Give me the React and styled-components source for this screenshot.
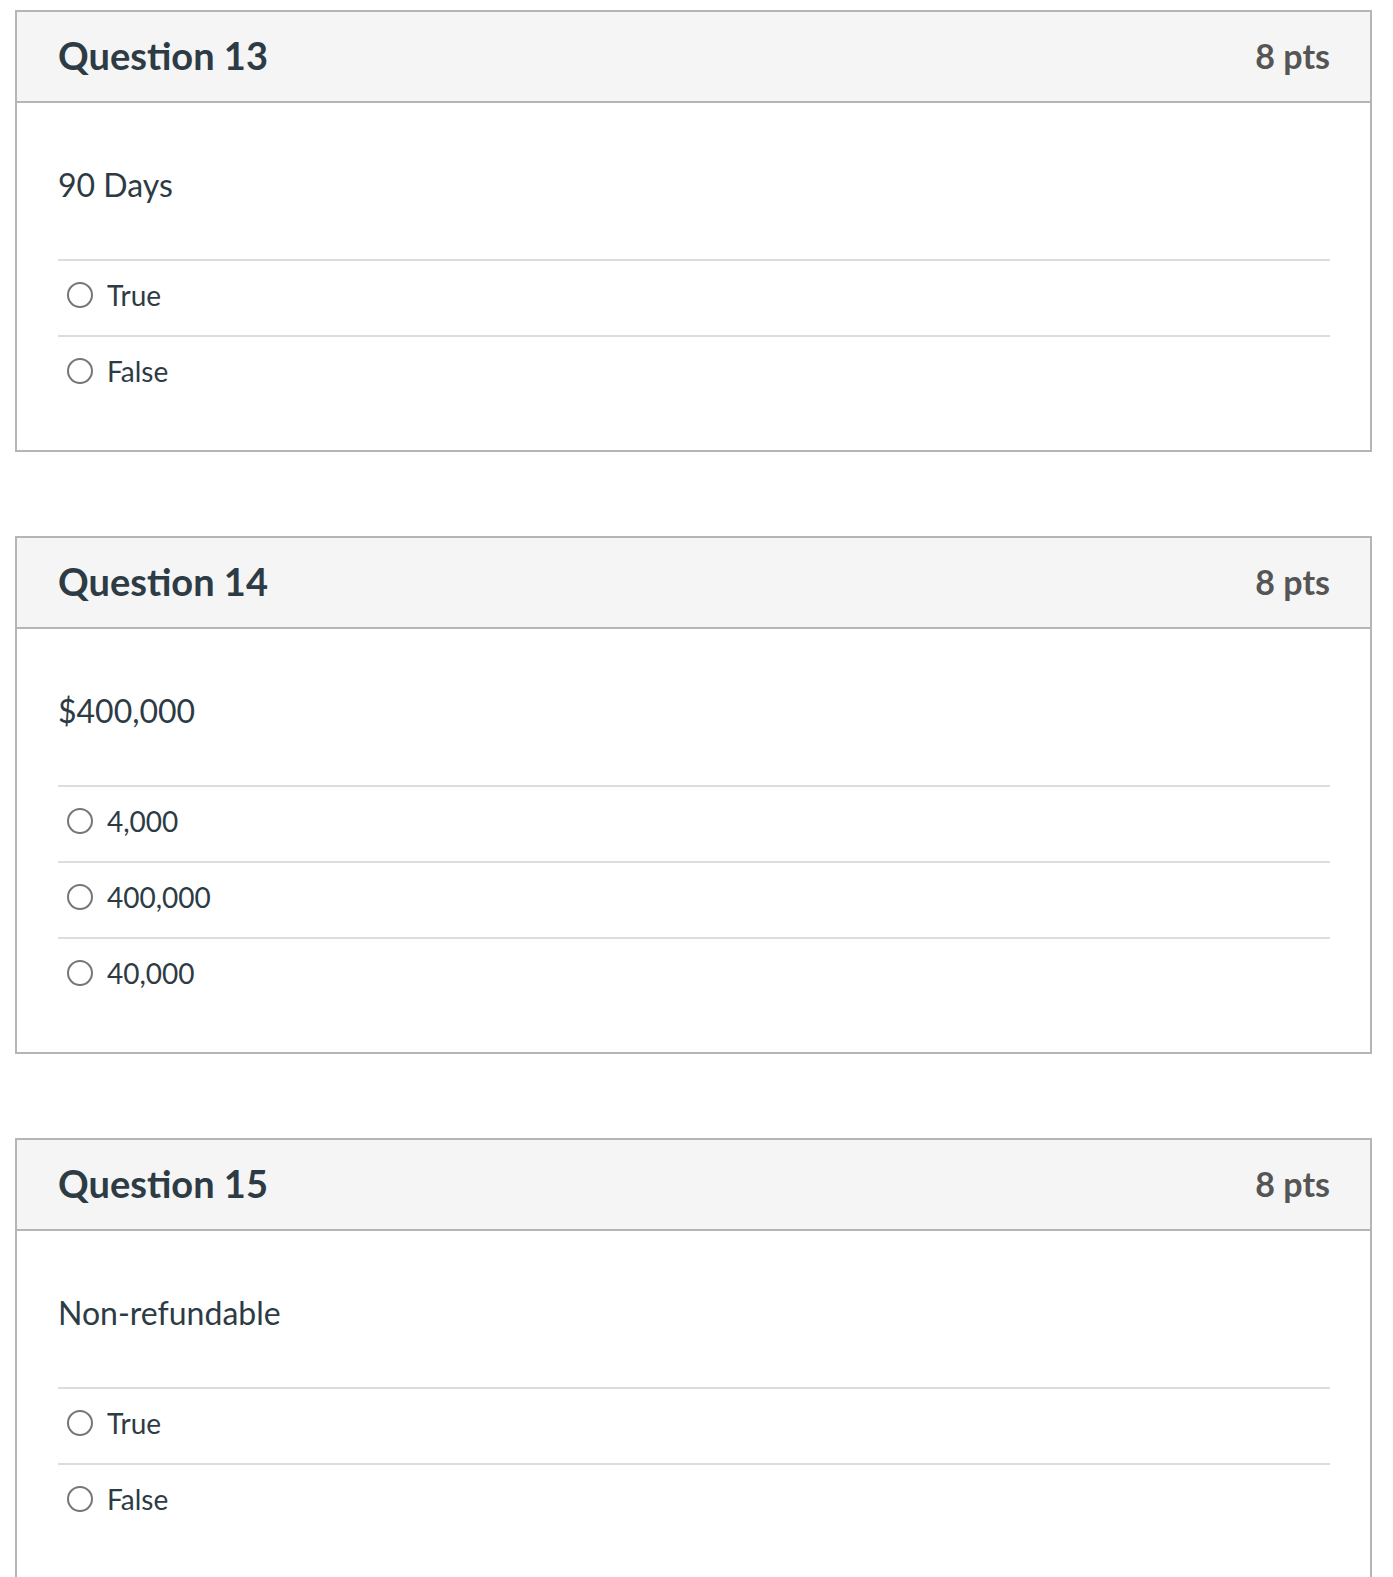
import styled, { createGlobalStyle } from "styled-components";

const GlobalStyle = createGlobalStyle`
html, body {
    margin: 0;
    overflow: hidden;
    background: #ffffff;
    font-family: Lato, "Liberation Sans", sans-serif;
}
`;

const questions = [
    { number: 13, points: 8, text: "90 Days", answers: ["True", "False"] },
    { number: 14, points: 8, text: "$400,000", answers: ["4,000", "400,000", "40,000"] },
    { number: 15, points: 8, text: "Non-refundable", answers: ["True", "False"] },
];

export default function App() {
    return (
        <Page>
            <GlobalStyle />
            {questions.map((q, i) => (
                <Card key={q.number}>
                    <Header>
                        <Title>Question {q.number}</Title>
                        <Points>{q.points} pts</Points>
                    </Header>
                    <Body $last={i === questions.length - 1}>
                        <QuestionText>{q.text}</QuestionText>
                        {q.answers.map((a) => (
                            <Answer key={a}>
                                <Radio />
                                <AnswerLabel>{a}</AnswerLabel>
                            </Answer>
                        ))}
                    </Body>
                </Card>
            ))}
        </Page>
    );
}

const Page = styled.div`
padding: 10px 21px 0 15px;
display: flex;
flex-direction: column;
gap: 84px;
`;

const Card = styled.div`
border: 2px solid #b5b5b5;
background: #ffffff;
`;

const Header = styled.div`
height: 86px;
padding: 0 40px 3px 41px;
background: #f5f5f5;
border-bottom: 2px solid #b5b5b5;
display: flex;
justify-content: space-between;
align-items: center;
`;

const Title = styled.h2`
margin: 0;
font-size: 38px;
font-weight: 700;
color: #2d3b45;
`;

const Points = styled.div`
font-size: 34px;
font-weight: 700;
color: #555555;
`;

const Body = styled.div`
padding: 0 40px ${(p) => (p.$last ? "70px" : "39px")} 41px;
`;

const QuestionText = styled.div`
height: 156px;
box-sizing: border-box;
padding-top: 64px;
line-height: 36px;
font-size: 32px;
color: #2d3b45;
`;

const Answer = styled.div`
height: 68px;
border-top: 2px solid #dddddd;
padding: 0 0 6px 9px;
display: flex;
align-items: center;
gap: 14px;
`;

const Radio = styled.span`
width: 22px;
height: 22px;
border: 2px solid #767676;
border-radius: 50%;
flex-shrink: 0;
`;

const AnswerLabel = styled.span`
font-size: 28px;
color: #2d3b45;
`;
